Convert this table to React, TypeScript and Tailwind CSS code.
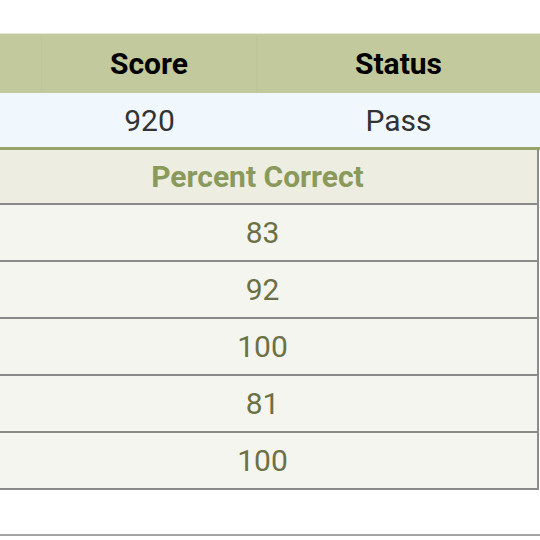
const scores = [83, 92, 100, 81, 100];

function App() {
  return (
    <div
      className="w-[540px] h-[540px] bg-white overflow-hidden flex flex-col"
      style={{ fontFamily: "Roboto, 'Noto Sans', sans-serif" }}
    >
      <div className="h-[34px] border-b border-[#e6e9d6] shrink-0" />
      <div className="h-[59px] shrink-0 bg-[#c2c99c] grid grid-cols-[42px_215px_1fr] text-[30px] font-bold text-black">
        <div className="border-r border-[#bec596]" />
        <div className="flex items-center justify-center border-r border-[#bec596]">Score</div>
        <div className="flex items-center justify-center">Status</div>
      </div>
      <div className="h-[54px] shrink-0 bg-[#f0f8fd] grid grid-cols-[42px_215px_1fr] text-[30px] text-[#333333]">
        <div />
        <div className="flex items-center justify-center">920</div>
        <div className="flex items-center justify-center">Pass</div>
      </div>
      <div className="h-[3px] shrink-0 bg-[#98a46a]" />
      <div className="flex flex-col shrink-0 border-r-2 border-[#8c8c8c] mr-[1px] ml-[-12px]">
        <div className="h-[55px] bg-[#ededE2] flex items-center justify-center pr-[10px] text-[30px] font-bold text-[#8a9a5b] border-b-2 border-[#8a8a8a]">
          Percent Correct
        </div>
        {scores.map((s, i) => (
          <div
            key={i}
            className="h-[57px] bg-[#f5f5ef] flex items-center justify-center text-[30px] text-[#6b7045] border-b-2 border-[#8a8a8a]"
          >
            {s}
          </div>
        ))}
      </div>
      <div className="h-[44px] shrink-0" />
      <div className="h-[2px] shrink-0 bg-[#a3a3a3]" />
    </div>
  );
}

export default App;
